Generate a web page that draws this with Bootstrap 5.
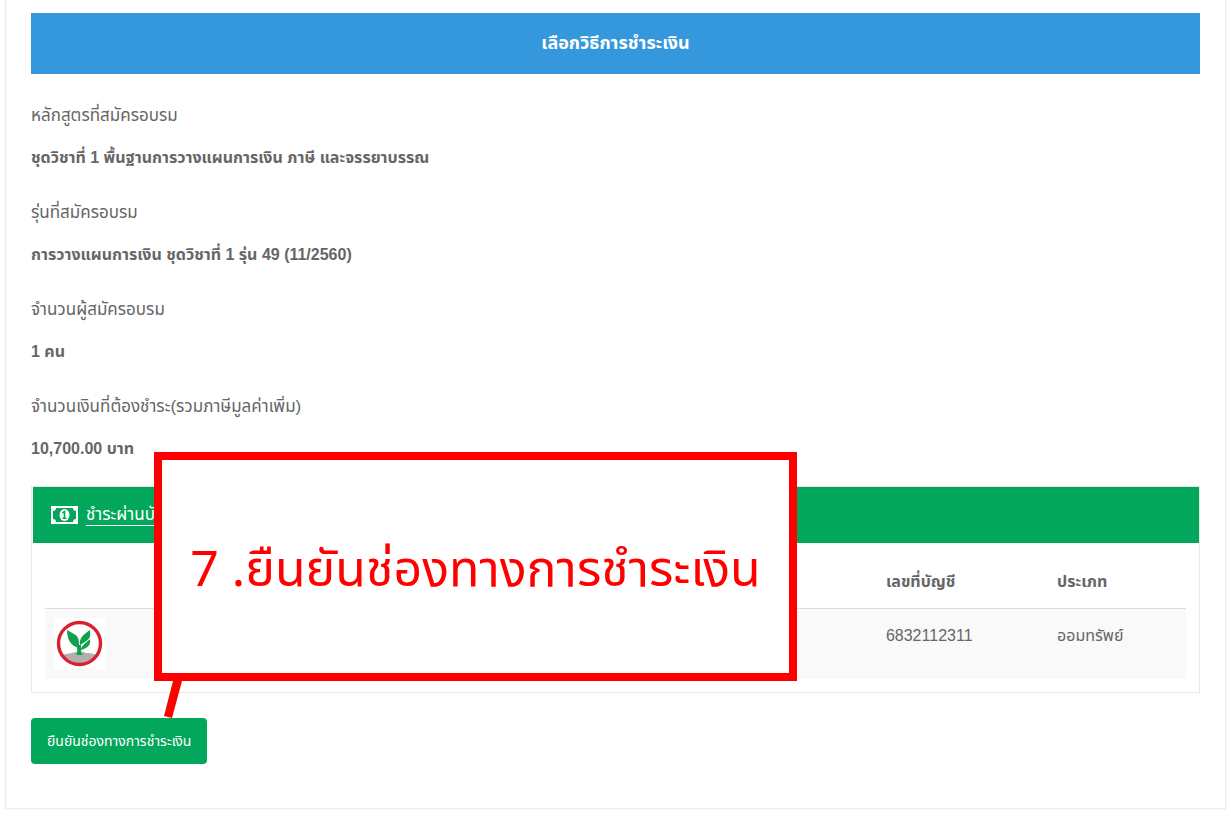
<!DOCTYPE html>
<html lang="th">
<head>
<meta charset="utf-8">
<meta name="viewport" content="width=device-width, initial-scale=1">
<title>เลือกวิธีการชำระเงิน</title>
<link href="https://cdn.jsdelivr.net/npm/bootstrap@5.3.0/dist/css/bootstrap.min.css" rel="stylesheet">
<style>
  body { font-family: "Liberation Sans", "Noto Sans Thai", sans-serif; font-size: 16px; line-height: 24px; color: #666; background: #fff; }
  .sheet { margin: 0 5px 10px; padding: 13px 25px 44px; border: 1px solid #ececec; border-top: 0; box-shadow: 0 1px 2px rgba(0,0,0,.04); }
  .page-title { font-size: 18px; line-height: 61px; background: #3598dc; }
  .facts { margin: 30px 0 25px; }
  .facts dt { font-size: 17px; font-weight: 400; margin-bottom: 18px; }
  .facts dd { font-weight: 700; margin-bottom: 31px; }
  .facts dd:last-child { margin-bottom: 0; }
  .pay-panel { border: 1px solid #e7e7e7; border-radius: 0; }
  .card-header.pay-head { height: 56px; padding: 0 18px; margin-left: 1px; background: #02a75b; border-radius: 0; }
  .pay-head a { color: #fff; font-size: 17px; text-underline-offset: 5px; }
  .pay-body { padding: 13px; }
  .bank-table { --bs-table-striped-bg: #f9f9f9; --bs-table-striped-color: #666; color: #666; table-layout: fixed; }
  .bank-table th { height: 52px; padding: 14px 8px; border-bottom: 1px solid #ddd; }
  .bank-table td { height: 70px; padding: 15px 8px 9px; border: 0; }
  .bank-table td.logo-cell { padding: 9px; }
  .btn-confirm { --bs-btn-color: #fff; --bs-btn-bg: #02a75b; --bs-btn-hover-color: #fff; --bs-btn-hover-bg: #018f4d; --bs-btn-border-width: 0; --bs-btn-border-radius: 4px; --bs-btn-padding-x: 16px; --bs-btn-padding-y: 11px; --bs-btn-font-size: 14px; margin-top: 25px; line-height: 24px; }
  .callout { top: -34px; left: 123px; width: 55%; height: 229px; border: 8px solid #f00; background: #fff; color: #f00; font-family: "Noto Sans", "Noto Sans Thai", sans-serif; font-size: 50px; line-height: 64px; }
  .callout-stem { top: 195px; left: 132px; }
</style>
</head>
<body>
<main class="sheet">
  <h1 class="page-title text-white text-center fw-bold m-0">เลือกวิธีการชำระเงิน</h1>
  <dl class="facts">
    <dt>หลักสูตรที่สมัครอบรม</dt>
    <dd>ชุดวิชาที่ 1 พื้นฐานการวางแผนการเงิน ภาษี และจรรยาบรรณ</dd>
    <dt>รุ่นที่สมัครอบรม</dt>
    <dd>การวางแผนการเงิน ชุดวิชาที่ 1 รุ่น 49 (11/2560)</dd>
    <dt>จำนวนผู้สมัครอบรม</dt>
    <dd>1 คน</dd>
    <dt>จำนวนเงินที่ต้องชำระ(รวมภาษีมูลค่าเพิ่ม)</dt>
    <dd>10,700.00 บาท</dd>
  </dl>
  <section class="position-relative">
    <div class="card pay-panel">
      <div class="card-header pay-head border-0 d-flex align-items-center gap-2">
        <svg width="27" height="18" viewBox="0 0 27 18" aria-hidden="true">
          <path fill="#fff" fill-rule="evenodd" d="M0 0h27v18H0zM5 2a3 3 0 0 1-3 3v8a3 3 0 0 1 3 3h17a3 3 0 0 1 3-3V5a3 3 0 0 1-3-3z"/>
          <ellipse cx="13.500" cy="9" rx="5" ry="6" fill="#fff"/>
          <path d="M11.500 7l2-1.500V12M11.500 12.200h4" fill="none" stroke="#02a75b" stroke-width="1.600"/>
        </svg>
        <a href="#bank">ชำระผ่านบัญชีธนาคาร</a>
      </div>
      <div class="card-body pay-body" id="bank">
        <table class="table table-striped bank-table mb-0">
          <colgroup><col style="width:15%"><col style="width:29%"><col style="width:29%"><col style="width:15%"><col style="width:12%"></colgroup>
          <thead><tr><th></th><th></th><th></th><th scope="col">เลขที่บัญชี</th><th scope="col">ประเภท</th></tr></thead>
          <tbody><tr>
            <td class="logo-cell">
              <svg class="d-block" width="51" height="51" viewBox="0 0 51 51" role="img" aria-label="KBank">
                <rect width="51" height="51" fill="#fff"/>
                <path d="M8 38c3-3 7-2 10-3 5-2 10-2 14 0 4 0 8 0 11 3-7 10-28 10-35 0z" fill="#b3aeb0"/>
                <path d="M13 12l7 4c4 2 5 5 5 10v4c-8-2-12-8-12-18z" fill="#12a14b"/>
                <path d="M26 27c-1-7 3-10 10-15v6c0 3-5 6-10 9zM27 31c1-4 5-6 9-10 1 6-2 9-9 11z" fill="#12a14b"/>
                <path d="M23 27h4v6c0 2 1 3 2 4h-7c2-2 1-6 1-10z" fill="#12a14b"/>
                <circle cx="25.500" cy="25.500" r="21" fill="none" stroke="#dc1f2e" stroke-width="3.400"/>
              </svg>
            </td>
            <td></td><td></td><td>6832112311</td><td>ออมทรัพย์</td>
          </tr></tbody>
        </table>
      </div>
    </div>
    <div class="callout position-absolute d-flex align-items-center justify-content-center text-nowrap">7 .ยืนยันช่องทางการชำระเงิน</div>
    <svg class="callout-stem position-absolute" width="24" height="38" viewBox="0 0 24 38" aria-hidden="true"><path d="M10 0h9L9 37 1 35z" fill="#f00"/></svg>
  </section>
  <button type="button" class="btn btn-confirm">ยืนยันช่องทางการชำระเงิน</button>
</main>
<script src="https://cdn.jsdelivr.net/npm/bootstrap@5.3.0/dist/js/bootstrap.bundle.min.js"></script>
</body>
</html>
